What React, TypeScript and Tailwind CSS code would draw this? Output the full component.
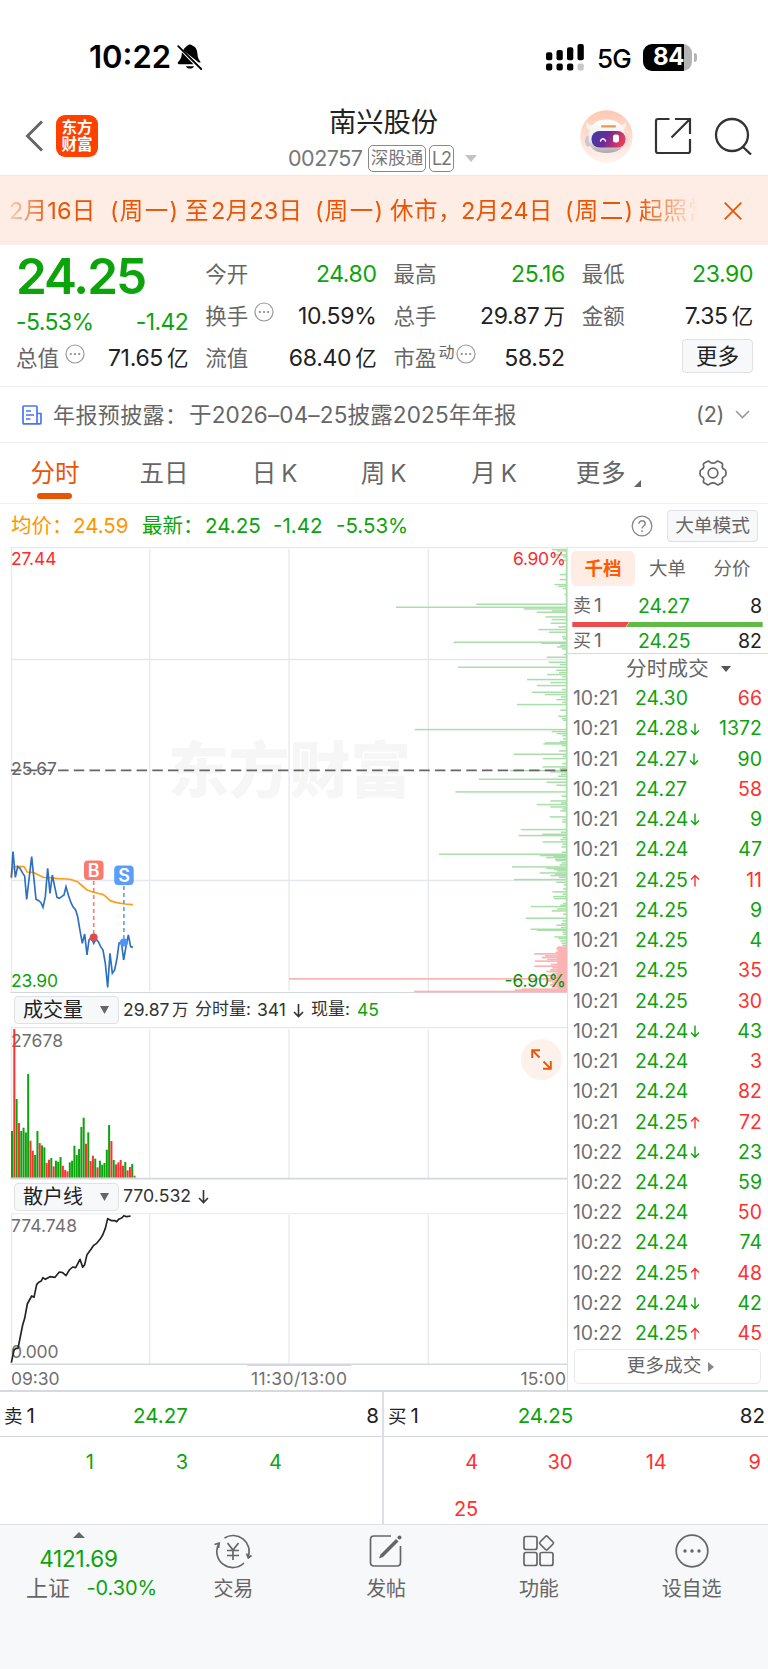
import React from "react";

type Trade = [time: string, price: string, dir: "" | "up" | "down", vol: string, side: "b" | "s"];

const TRADES: Trade[] = [
  ["10:21", "24.30", "", "66", "b"],
  ["10:21", "24.28", "down", "1372", "s"],
  ["10:21", "24.27", "down", "90", "s"],
  ["10:21", "24.27", "", "58", "b"],
  ["10:21", "24.24", "down", "9", "s"],
  ["10:21", "24.24", "", "47", "s"],
  ["10:21", "24.25", "up", "11", "b"],
  ["10:21", "24.25", "", "9", "s"],
  ["10:21", "24.25", "", "4", "s"],
  ["10:21", "24.25", "", "35", "b"],
  ["10:21", "24.25", "", "30", "b"],
  ["10:21", "24.24", "down", "43", "s"],
  ["10:21", "24.24", "", "3", "b"],
  ["10:21", "24.24", "", "82", "b"],
  ["10:21", "24.25", "up", "72", "b"],
  ["10:22", "24.24", "down", "23", "s"],
  ["10:22", "24.24", "", "59", "s"],
  ["10:22", "24.24", "", "50", "b"],
  ["10:22", "24.24", "", "74", "s"],
  ["10:22", "24.25", "up", "48", "b"],
  ["10:22", "24.24", "down", "42", "s"],
  ["10:22", "24.25", "up", "45", "b"],
];

/* Depth bars: [vertical position, length], in thirds of a pixel. */
const ASKS: number[][] = [
  [28, 46], [32, 30], [44, 40], [50, 12], [60, 10], [103, 22], [118, 22], [133, 38], [138, 26], [145, 12], [163, 8],
  [192, 272], [201, 513], [206, 130], [212, 46], [216, 91], [230, 64], [238, 46], [249, 49], [260, 26],
  [268, 86], [276, 54], [290, 15], [296, 12], [306, 340], [309, 78], [315, 20], [320, 30], [326, 15], [343, 10], [351, 61],
  [366, 55], [373, 22], [381, 327], [390, 32], [397, 24], [403, 60], [410, 14], [418, 120], [427, 50], [436, 90],
  [448, 16], [456, 105], [463, 66], [470, 18], [478, 32], [486, 14], [493, 150], [510, 20], [528, 26], [535, 16], [540, 12],
  [568, 457], [574, 46], [580, 31], [586, 14], [596, 12], [604, 22], [608, 66], [611, 71], [616, 16], [632, 24], [642, 160],
  [648, 12], [655, 73], [670, 14], [680, 73], [685, 22], [691, 171], [695, 50], [702, 18], [708, 27], [717, 265], [726, 62],
  [735, 32], [755, 335], [768, 17], [782, 50], [788, 18], [793, 91], [800, 50], [806, 14], [812, 20], [830, 52], [838, 14], [845, 15],
  [868, 138], [876, 18], [882, 74], [886, 145], [892, 14], [898, 20], [905, 73], [912, 14], [920, 17], [936, 16],
  [942, 384], [946, 82], [949, 40], [952, 62], [957, 36], [961, 34], [968, 16], [974, 22], [980, 165], [984, 62], [988, 40],
  [992, 30], [998, 82], [1002, 36], [1006, 50], [1011, 24], [1018, 159], [1026, 32], [1034, 10], [1046, 12], [1055, 44], [1062, 14],
  [1069, 42], [1075, 40], [1090, 12], [1095, 20], [1099, 109], [1106, 30], [1112, 46], [1122, 12], [1134, 124], [1142, 14],
  [1150, 18], [1155, 32], [1162, 18], [1167, 109], [1170, 91], [1176, 14], [1182, 12], [1190, 38], [1195, 26], [1202, 20], [1209, 16], [1215, 14],
];
const BIDS: number[][] = [
  [1222, 28], [1226, 32], [1232, 26], [1238, 34], [1242, 98], [1248, 66], [1253, 76], [1259, 60], [1264, 96], [1270, 30], [1274, 48],
  [1279, 98], [1284, 44], [1290, 50], [1295, 62], [1301, 44], [1307, 80], [1312, 50], [1317, 834], [1323, 60], [1329, 44],
  [1335, 52], [1341, 46], [1348, 136], [1351, 156], [1355, 459],
];

/* Volume bars: [height in thirds of a pixel, is rising]. */
const VOLUME: [number, boolean][] = [
  [140, false], [446, true], [236, false], [164, true], [140, false], [150, false], [136, false], [311, false], [111, true],
  [81, true], [68, false], [140, false], [104, true], [97, false], [91, false], [44, true], [54, true], [59, false], [34, true],
  [51, false], [48, false], [62, false], [36, true], [23, true], [19, true], [46, false], [51, false], [96, false], [68, false],
  [86, false], [152, false], [180, false], [102, true], [136, false], [50, true], [66, true], [57, false], [31, true], [51, false],
  [39, false], [44, false], [84, false], [158, false], [110, true], [53, false], [40, true], [46, true], [53, true], [36, true],
  [47, false], [22, true], [32, true], [41, false], [6, true],
];

const PRICE =
  "34,232 39,155 46,232 53,200 60,205 67,218 74,228 80,298 95,170 108,298 116,302 123,308 129,322 136,290 143,205 150,280 157,225 164,260 171,292 178,295 185,290 192,285 198,260 206,288 213,308 220,322 227,330 233,350 240,392 247,430 254,402 261,465 267,420 274,412 281,430 288,418 295,425 302,440 309,450 316,490 323,562 330,460 337,520 344,510 351,475 357,430 364,425 371,480 378,440 385,405 392,440 399,442";
const AVERAGE =
  "34,235 37,210 40,202 50,199 72,200 77,207 81,216 100,217 115,225 130,232 150,233 175,236 200,237 215,239 232,245 247,258 260,269 275,275 290,279 310,284 318,290 330,302 350,308 375,312 399,314";
const RETAIL =
  "34,1118 42,1080 48,1075 54,1075 62,1035 68,1005 74,985 82,942 95,918 102,922 110,884 116,877 124,873 129,863 136,868 150,860 165,862 178,846 188,848 198,857 208,840 218,831 227,833 240,808 248,832 254,824 261,794 273,778 281,766 290,760 300,748 308,735 316,715 323,686 335,692 345,692 350,695 356,688 365,684 372,677 380,680 392,678";

function StatusBar() {
  return (
    <div className="flex h-[100px] items-start justify-between pt-[41px] pr-[71px] pl-[89px] text-black">
      <div className="flex h-8 items-center">
        <span className="w-[88px] text-[31px] font-semibold">10:22</span>
        <svg className="mt-px h-[27px] w-[26px]" viewBox="0 0 26 27">
          <path d="M6.2 6.2C7.8 3 10 2 10.6 1.4C11.6.2 14.2.2 15.2 1.4C19.5 2.8 20.3 7 20.5 10.5C20.7 14 22 16 23.8 18.2L21.7 18.4ZM4.8 8.3L16.5 20.3H2C.8 20.3.4 19 1.2 18C3.6 15.3 4.9 13.4 4.8 8.3ZM9 22.2H17C16.3 25.3 9.7 25.3 9 22.2Z" fill="#000" />
          <path d="M1.2 2.2L24.2 25" stroke="#000" strokeWidth="1.8" strokeLinecap="round" />
        </svg>
      </div>
      <div className="flex h-8 items-center">
        <svg className="h-[27px] w-[38px]" viewBox="0 0 38 27">
          <g fill="#000">
            <rect x="0" y="8.3" width="6.3" height="8" rx="2" />
            <rect x="10.5" y="6" width="6.3" height="10.3" rx="2" />
            <rect x="21" y="3.2" width="6.3" height="13.1" rx="2" />
            <rect x="31.5" y="0" width="6.3" height="16.3" rx="2" />
            <rect x="0" y="19.5" width="6.3" height="7" rx="2" />
            <rect x="10.5" y="19.5" width="6.3" height="7" rx="2" />
            <rect x="21" y="19.5" width="6.3" height="7" rx="2" />
          </g>
          <rect x="31.5" y="19.5" width="6.3" height="7" rx="2" fill="#c8c8c8" />
        </svg>
        <span className="mt-[3px] ml-[13px] w-[46px] text-[26px] leading-none font-medium tracking-[-0.8px]">5G</span>
        <div className="flex h-[27px] w-[49px] items-center justify-center overflow-hidden rounded-[9px] bg-[linear-gradient(90deg,#000_84%,#b4b4b4_84%)] pl-0.5 text-[24px] leading-none font-bold tracking-[-0.5px] text-white">
          84
        </div>
        <div className="ml-[2px] h-[9px] w-[3px] rounded-r-full bg-[#b4b4b4]" />
      </div>
    </div>
  );
}

function Robot() {
  return (
    <svg className="size-[53px]" viewBox="0 0 53 53">
      <defs>
        <linearGradient id="halo" x1="0" y1="0" x2="0" y2="1">
          <stop offset="0" stopColor="#fdc9b2" />
          <stop offset="1" stopColor="#fff3ee" />
        </linearGradient>
        <linearGradient id="visor" x1="0" y1="0" x2="1" y2="0.25">
          <stop offset="0" stopColor="#3d3ba6" />
          <stop offset="0.5" stopColor="#6b2a98" />
          <stop offset="1" stopColor="#e8395c" />
        </linearGradient>
        <linearGradient id="shell" x1="0" y1="0" x2="0" y2="1">
          <stop offset="0" stopColor="#ffffff" />
          <stop offset="0.6" stopColor="#eeeaec" />
          <stop offset="1" stopColor="#a9a6ae" />
        </linearGradient>
      </defs>
      <circle cx="26.5" cy="26.5" r="26.2" fill="url(#halo)" />
      <path d="M6.500 11.500C5.500 16 7 19.500 10.500 20L14 14.500C10.500 15.500 8 14.500 6.500 11.500ZM46 11.500C47 16 45.500 19.500 42 20L39 14.500C42 15.500 44.500 14.500 46 11.500Z" fill="#f4f1f1" />
      <ellipse cx="8.500" cy="31" rx="3.500" ry="5.500" fill="#c9c6cc" />
      <ellipse cx="45" cy="31" rx="3.500" ry="5.500" fill="#e6dfe2" />
      <path d="M8.500 28C8.500 15 16 9.500 26.500 9.500S45 15 45 28C45 38 38 43 26.500 43S8.500 38 8.500 28Z" fill="url(#shell)" />
      <rect x="21" y="15.200" width="15" height="2.300" rx="1.100" fill="#e59a55" />
      <rect x="11.500" y="21" width="34" height="16.500" rx="8" fill="url(#visor)" />
      <path d="M20.500 31C21.500 28 24.500 28 25.500 31" fill="none" stroke="#fff" strokeWidth="1.500" strokeLinecap="round" />
      <rect x="33" y="24.500" width="6" height="8" rx="2.300" fill="#fff" />
    </svg>
  );
}

function Header() {
  return (
    <header className="flex h-[76px] items-center border-b border-[#e9e9ec] pr-[17px] pl-[25px]">
      <svg className="mt-[-3px] h-[32px] w-[18px]" viewBox="0 0 18 32" fill="none" stroke="#666" strokeWidth="3">
        <path d="M17 1.500L2.500 16L17 30.500" />
      </svg>
      <div className="mt-[-3px] ml-[13px] grid size-[42px] grid-cols-1 place-content-center rounded-[9px] bg-[#ff4100] text-center text-[15.500px] leading-[17.500px] font-bold text-white">
        <span>东方</span>
        <span>财富</span>
      </div>
      <div className="mt-[3px] ml-[190px] flex w-[190px] flex-col items-center">
        <h1 className="h-[38px] pl-px text-[27.300px] leading-[38px] text-[#222]">南兴股份</h1>
        <div className="flex h-[33px] w-full items-center text-[#777]">
          <span className="w-[80px] text-[21.500px] tracking-[-0.500px] text-[#777]">002757</span>
          <span className="flex h-[27px] w-[58px] items-center justify-center rounded-[5px] border border-[#888] text-[17.500px]">深股通</span>
          <span className="ml-[3px] flex h-[27px] w-[25px] items-center justify-center rounded-[5px] border border-[#888] text-[18px] tracking-[-1px]">L2</span>
          <svg className="ml-[11px] h-[7px] w-[12px]" viewBox="0 0 12 7">
            <path d="M0 0H12L6 7Z" fill="#c3c3c3" />
          </svg>
        </div>
      </div>
      <div className="mt-[-3px] -mr-px ml-auto flex items-center">
        <Robot />
        <svg className="ml-[21px] size-[38px]" viewBox="0 0 38 38" fill="none" stroke="#333" strokeWidth="2.200">
          <path d="M15.500 2H4Q2 2 2 4V34Q2 36 4 36H34Q36 36 36 34V22" />
          <path d="M21 2H36V17M36 2L17.500 20.500" />
        </svg>
        <svg className="ml-[22px] size-[38px]" viewBox="0 0 38 38" fill="none" stroke="#333" strokeWidth="2.300">
          <circle cx="18" cy="18" r="16" />
          <path d="M28.500 29.500L37 37.500" />
        </svg>
      </div>
    </header>
  );
}

function Notice() {
  return (
    <div className="flex h-[69px] items-center bg-[#feede5] text-[23.500px] text-[#ea5504]">
      <div className="flex w-[698px] overflow-hidden pl-[9px] whitespace-nowrap [mask-image:linear-gradient(90deg,transparent_0,#000_50px,#000_640px,transparent_100%)]">
        <span className="w-[101px] shrink-0 tracking-[0.200px]">2月16日</span>
        <span className="w-[75px] shrink-0 tracking-[1.300px]">(周一)</span>
        <span className="w-[26px] shrink-0">至</span>
        <span className="w-[104px] shrink-0 tracking-[0.200px]">2月23日</span>
        <span className="w-[75px] shrink-0 tracking-[1.300px]">(周一)</span>
        <span className="w-[71px] shrink-0 tracking-[0.500px]">休市，</span>
        <span className="w-[104px] shrink-0 tracking-[0.200px]">2月24日</span>
        <span className="w-[74px] shrink-0 tracking-[1.300px]">(周二)</span>
        <span className="shrink-0 tracking-[1px]">起照常</span>
      </div>
      <svg className="ml-[26px] size-[18px]" viewBox="0 0 18 18" stroke="#ea5504" strokeWidth="1.800">
        <path d="M.7.7L17.300 17.300M17.300.7L.7 17.300" />
      </svg>
    </div>
  );
}

function Info() {
  return (
    <svg className="mb-2 ml-[6px] size-[20px]" viewBox="0 0 20 20">
      <circle cx="10" cy="10" r="9" fill="none" stroke="#999" strokeWidth="1.200" />
      <g fill="#888">
        <circle cx="5.800" cy="10" r="1.100" />
        <circle cx="10" cy="10" r="1.100" />
        <circle cx="14.200" cy="10" r="1.100" />
      </g>
    </svg>
  );
}

function Stat({ label, value, green, info, sup }: { label: string; value: string; green?: boolean; info?: boolean; sup?: string }) {
  return (
    <div className="flex h-[42px] items-center">
      <span className="text-[21.500px] text-[#666]">{label}</span>
      {sup && <span className="-mr-[5px] mb-3 ml-[2px] text-[16px] text-[#666]">{sup}</span>}
      {info && <Info />}
      <span className={green ? "ml-auto text-[23px] tracking-[-0.400px] text-[#0da30d]" : "ml-auto text-[23px] tracking-[-0.300px] text-[#222]"}>
        {value.replace(/[亿万]/, "")}
        {/[亿万]/.test(value) && <span className="ml-[4px] text-[21.500px]">{value.slice(-1)}</span>}
      </span>
    </div>
  );
}

function Quotes() {
  return (
    <section className="grid h-[142px] grid-cols-4 gap-[17px] border-b border-[#f1f1f3] pt-[8px] pr-[15px] pl-[17px]">
      <div className="-ml-px">
        <div className="h-[48px] text-[49.500px] leading-[46px] font-semibold tracking-[-2px] text-[#0da30d]">24.25</div>
        <div className="flex h-[36px] items-center justify-between pt-[7px] text-[23px] tracking-[-0.600px] text-[#0da30d]">
          <span>-5.53%</span>
          <span>-1.42</span>
        </div>
        <Stat label="总值" value="71.65亿" info />
      </div>
      <div>
        <Stat label="今开" value="24.80" green />
        <Stat label="换手" value="10.59%" info />
        <Stat label="流值" value="68.40亿" />
      </div>
      <div>
        <Stat label="最高" value="25.16" green />
        <Stat label="总手" value="29.87万" />
        <Stat label="市盈" value="58.52" sup="动" info />
      </div>
      <div>
        <Stat label="最低" value="23.90" green />
        <Stat label="金额" value="7.35亿" />
        <button className="mt-[2px] ml-auto flex h-[34px] w-[71px] items-center justify-center rounded-[4px] border border-[#dfe1e6] bg-[#f7f8fa] text-[21.500px] text-[#222]">
          更多
        </button>
      </div>
    </section>
  );
}

function Report() {
  return (
    <section className="flex h-[56px] items-center border-b border-[#f1f1f3] pr-[18px] pl-[22px] text-[22px] text-[#666]">
      <svg className="size-[20px]" viewBox="0 0 20 20" fill="none" stroke="#4a74f0" strokeWidth="1.700">
        <path d="M15 18.800H2Q1 18.800 1 17.800V2Q1 1 2 1H14Q15 1 15 2V18.800H18Q19 18.800 19 17.800V8.500H15M4 6H9M4 10H12M4 14H8.500" />
      </svg>
      <span className="mt-px ml-[11px] w-[136px] whitespace-nowrap tracking-[0.400px]">年报预披露：</span>
      <span className="mt-px text-[22.500px] tracking-[0.160px]">于2026–04–25披露2025年年报</span>
      <span className="ml-auto text-[21.500px] tracking-[-0.300px]">(2)</span>
      <svg className="ml-[11px] h-[9px] w-[15px]" viewBox="0 0 15 9" fill="none" stroke="#999" strokeWidth="1.600">
        <path d="M1 1L7.500 7.500L14 1" />
      </svg>
    </section>
  );
}

function KTab({ period, className }: { period: string; className: string }) {
  return (
    <span className={className}>
      {period}
      <span className="ml-[5px] text-[24px]">K</span>
    </span>
  );
}

function Tabs() {
  return (
    <nav className="flex h-[61px] border-b border-[#f1f1f3] text-[24.500px] text-[#666]">
      <div className="flex w-[109px] flex-col items-center text-[#ea5504]">
        <span className="h-[50px] pl-px leading-[60px]">分时</span>
        <span className="h-[6px] w-[35px] rounded-full bg-[#ea5504]" />
      </div>
      <span className="w-[110px] text-center leading-[60px]">五日</span>
      <KTab period="日" className="w-[111px] text-center leading-[60px]" />
      <KTab period="周" className="w-[107px] text-center leading-[60px]" />
      <KTab period="月" className="w-[114px] text-center leading-[60px]" />
      <span className="flex w-[115px] justify-center leading-[60px] tracking-[0.800px]">
        更多
        <svg className="mt-[37px] ml-[8px] size-[7px]" viewBox="0 0 7 7">
          <path d="M7 0V7H0Z" fill="#666" />
        </svg>
      </span>
      <span className="flex flex-1 items-center pl-[33px]">
        <svg className="size-[28px]" viewBox="0 0 28 28" fill="none" stroke="#666" strokeWidth="1.700" strokeLinejoin="round">
          <path d="M8.200 2.500Q9.500 1.500 11 3.200Q14 5.200 17 3.200Q18.500 1.500 19.800 2.500L23 4.200Q24 5 23.300 7.200Q22.800 9.500 25.500 10.500Q27.200 11.200 27 14Q27.200 16.800 25.500 17.500Q22.800 18.500 23.300 20.800Q24 23 23 23.800L19.800 25.500Q18.500 26.500 17 24.800Q14 22.800 11 24.800Q9.500 26.500 8.200 25.500L5 23.800Q4 23 4.700 20.800Q5.200 18.500 2.500 17.500Q.8 16.800 1 14Q.8 11.200 2.500 10.500Q5.200 9.500 4.700 7.200Q4 5 5 4.200Z" />
          <circle cx="14" cy="14" r="4.800" />
        </svg>
      </span>
    </nav>
  );
}

function AverageLine() {
  return (
    <div className="flex h-[43px] items-center pt-px pr-[10px] pl-[11px] text-[20.500px] text-[#0da30d]">
      <span className="w-[62px] text-[#ff9500]">均价：</span>
      <span className="w-[69px] text-[#ff9500]">24.59</span>
      <span className="w-[63px]">最新：</span>
      <span className="w-[68px]">24.25</span>
      <span className="w-[63px]">-1.42</span>
      <span>-5.53%</span>
      <svg className="ml-auto size-[22px]" viewBox="0 0 22 22" fill="none" stroke="#888" strokeWidth="1.300">
        <circle cx="11" cy="11" r="9.800" />
        <path d="M8 8.800C8 4.800 14.200 5 14.200 8.700C14.200 11 11.100 11 11.100 13.500M11.100 15.200V17" strokeWidth="1.500" />
      </svg>
      <button className="ml-[14px] flex h-[32px] w-[91px] items-center justify-center rounded-[4px] border border-[#dfe1e6] bg-[#f7f8fa] text-[18.700px] text-[#666]">
        大单模式
      </button>
    </div>
  );
}

function PriceChart() {
  return (
    <svg className="block h-[446px] w-[568px]" viewBox="0 547 568 446" fontSize="17.500" fontFamily="Inter, sans-serif">
      <text x="168" y="793" fontSize="61" fontWeight="900" fontFamily="Noto Sans CJK SC, sans-serif" textLength="243" fill="#f6f6f6">东方财富</text>
      <g stroke="#e5e8ef" strokeWidth="1.300">
        <path d="M11 547.500H568M11 659.500H567M11 880.500H567" />
        <path d="M11.500 548V992M149.700 549V991M289 549V991M428.300 549V991" />
      </g>
      <path d="M10.500 992.700H567" stroke="#d3d7df" strokeWidth="1.400" />
      <g fill="#a8dfa8">
        <rect x="565.800" y="549" width="1.200" height="398" />
        {ASKS.map(([y, w]) => (
          <rect key={y} x={567 - w / 3} y={539.5 + y / 3} width={w / 3} height="1.500" />
        ))}
      </g>
      <path d="M11 770.300H567" stroke="#666" strokeWidth="1.800" strokeDasharray="10.500 5.200" />
      <g fill="#fbb4b4">
        <rect x="557.500" y="947" width="9.500" height="45" />
        {BIDS.map(([y, w]) => (
          <rect key={y} x={567 - w / 3} y={539 + y / 3} width={w / 3} height="1.700" />
        ))}
      </g>
      <text x="11" y="564.500" fill="#ff2a2a" textLength="45.500">27.44</text>
      <text x="11" y="775" fill="#666" textLength="46">25.67</text>
      <text x="11" y="986.500" fill="#0da30d" textLength="47">23.90</text>
      <text x="513" y="564.500" fill="#ff2a2a" textLength="53">6.90%</text>
      <text x="504.500" y="986.500" fill="#0b8f0b" textLength="61.500">-6.90%</text>
      <g transform="translate(0 800) scale(.33333)" fill="none" strokeLinejoin="round">
        <polyline points={AVERAGE} stroke="#ff9d14" strokeWidth="5" />
        <polyline points={PRICE} stroke="#2c70c2" strokeWidth="5" strokeLinejoin="miter" />
      </g>
      <path d="M93.700 881V936" stroke="#fa7a6c" strokeWidth="1.600" strokeDasharray="4 3" />
      <path d="M123.900 886V941" stroke="#5a9dfa" strokeWidth="1.600" strokeDasharray="4 3" />
      <circle cx="93.700" cy="937.500" r="4" fill="#d84c50" />
      <circle cx="123.900" cy="942.500" r="4" fill="#4c94f5" />
      <rect x="84" y="860.500" width="19.500" height="19.500" rx="4" fill="#fa7a6c" />
      <rect x="114.200" y="865.500" width="19.500" height="19.500" rx="4" fill="#5a9dfa" />
      <text x="93.800" y="877" fontSize="18" fontWeight="600" textAnchor="middle" fill="#fff">B</text>
      <text x="124" y="882" fontSize="18" fontWeight="600" textAnchor="middle" fill="#fff">S</text>
    </svg>
  );
}

function Picker({ children }: { children: string }) {
  return (
    <button className="flex h-[28px] w-[105px] shrink-0 items-center justify-between rounded-[4px] border border-[#dfe1e6] bg-[#f7f8fa] pr-[9px] pl-[8px] text-[20px] text-[#222]">
      {children}
      <svg className="h-[8px] w-[9px]" viewBox="0 0 9 8">
        <path d="M0 0H9L4.500 8Z" fill="#666" />
      </svg>
    </button>
  );
}

function Down() {
  return (
    <svg className="h-[15px] w-[11px]" viewBox="0 0 11 15" fill="none" stroke="#333" strokeWidth="1.600">
      <path d="M5.500 1V13.500M1 9L5.500 13.500L10 9" />
    </svg>
  );
}

function VolumePanel() {
  return (
    <>
      <div className="flex h-[34px] items-center pl-[14px] text-[17.500px] text-[#333]">
        <Picker>成交量</Picker>
        <span className="ml-[4px] w-[49px]">29.87</span>
        <span className="w-[23px] text-[16.500px]">万</span>
        <span className="w-[62px] text-[17px]">分时量:</span>
        <span className="w-[36px]">341</span>
        <Down />
        <span className="ml-[7px] w-[46px] text-[17px]">现量:</span>
        <span className="text-[#0da30d]">45</span>
      </div>
      <div className="relative">
        <svg className="block h-[153px] w-[568px]" viewBox="0 1027 568 153" fontSize="17.500" fontFamily="Inter, sans-serif">
          <g stroke="#e5e8ef" strokeWidth="1.300">
            <path d="M11 1027.600H567M11.500 1028V1178M149.700 1029.500V1178M289 1029.500V1178M428.300 1029.500V1178" />
          </g>
          <text x="11" y="1046.500" fill="#707070" textLength="52">27678</text>
          {VOLUME.map(([h, up], i) => (
            <rect key={i} x={11 + i * 2.312} y={1177.7 - h / 3} width="2" height={h / 3} fill={up ? "#ff3030" : "#0da30d"} />
          ))}
          <path d="M10.500 1178.600H567" stroke="#d3d7df" strokeWidth="1.600" />
        </svg>
        <div className="absolute top-[12px] left-[521px] flex size-[41px] items-center justify-center rounded-full bg-[#fdf1eb]">
          <svg className="size-[21px]" viewBox="0 0 21 21" fill="none" stroke="#ea5504" strokeWidth="1.900">
            <path d="M1.200 9V1.200H9M1.200 1.200L8.500 8.500M19.800 12V19.800H12M19.800 19.800L12.500 12.500" />
          </svg>
        </div>
      </div>
    </>
  );
}

function RetailPanel() {
  return (
    <>
      <div className="flex h-[33px] items-center pl-[14px] text-[17.700px] text-[#333]">
        <Picker>散户线</Picker>
        <span className="ml-[4px] w-[75px]">770.532</span>
        <Down />
      </div>
      <svg className="block h-[177px] w-[568px]" viewBox="0 1213 568 177" fontSize="17.500" fontFamily="Inter, sans-serif">
        <path d="M11 1213.400H567" stroke="#ededf0" strokeWidth="1.500" />
        <g stroke="#e5e8ef" strokeWidth="1.300">
          <path d="M11.500 1214V1364M149.700 1215V1364M289 1215V1364M428.300 1215V1364" />
          <path d="M10.500 1364.300H567" stroke="#d3d7df" strokeWidth="1.500" />
          <path d="M247 1365.300H351" stroke="#d3d7df" />
        </g>
        <g fill="#707070">
          <text x="11" y="1232" textLength="66">774.748</text>
          <text x="11" y="1357.700" textLength="47.500">0.000</text>
          <text x="11" y="1384.700" textLength="48.500">09:30</text>
          <text x="251" y="1384.700" textLength="96">11:30/13:00</text>
          <text x="520.500" y="1384.700" textLength="45.500">15:00</text>
        </g>
        <polyline transform="translate(0 990) scale(.33333)" points={RETAIL} fill="none" stroke="#222" strokeWidth="5" strokeLinejoin="round" />
      </svg>
    </>
  );
}

function Tick({ dir }: { dir: "up" | "down" }) {
  return (
    <svg className="ml-[2px] h-[13px] w-[10px]" viewBox="0 0 10 13" fill="none" stroke={dir === "up" ? "#ff3030" : "#0da30d"} strokeWidth="1.400">
      <path d={dir === "up" ? "M5 12.500V1.500M1 5.500L5 1.500L9 5.500" : "M5 .5V11.500M1 7.500L5 11.500L9 7.500"} />
    </svg>
  );
}

function Level({ label, price, vol }: { label: string; price: string; vol: string }) {
  return (
    <div className="flex h-[28px] items-center pr-[6px] pl-[5px]">
      <span className="w-[65px] text-[18px] text-[#666]">
        {label}
        <span className="ml-[3px] text-[19px]">1</span>
      </span>
      <span className="text-[19.500px] tracking-[-0.100px] text-[#0da30d]">{price}</span>
      <span className="ml-auto text-[19.500px] text-[#222]">{vol}</span>
    </div>
  );
}

function SidePanel() {
  return (
    <aside className="flex h-[843px] flex-1 flex-col border-l border-[#dcdfe6]">
      <div className="flex h-[44px] items-start border-t border-[#e5e8ef] pt-[3px] pl-[3px] text-[18.500px] text-[#666]">
        <span className="flex h-[35px] w-[64px] items-center justify-center rounded-[5px] bg-[#feede5] font-bold text-[#ff5a00]">千档</span>
        <span className="flex h-[35px] w-[65px] items-center justify-center">大单</span>
        <span className="flex h-[35px] w-[64px] items-center justify-center">分价</span>
      </div>
      <div className="h-[31px] pt-[1.500px]">
        <Level label="卖" price="24.27" vol="8" />
      </div>
      <svg className="ml-[4px] h-[5px] w-[192px]" viewBox="0 0 192 5">
        <path d="M0 0H57L53.500 5H0Z" fill="#ee4b4b" />
        <path d="M57.500 0H191V5H54Z" fill="#60bb46" />
      </svg>
      <div className="h-[28px] pt-px">
        <Level label="买" price="24.25" vol="82" />
      </div>
      <div className="mt-[-2px] flex h-[31px] items-center justify-center border-t-[1.500px] border-[#d5d9e0] pt-px pl-[21px] text-[20.500px] tracking-[0.300px] text-[#666]">
        分时成交
        <svg className="ml-[12px] h-[6px] w-[10px]" viewBox="0 0 10 6">
          <path d="M0 0H10L5 6Z" fill="#555" />
        </svg>
      </div>
      {TRADES.map(([time, price, dir, vol, side], i) => (
        <div key={i} className="flex h-[30.350px] items-center pr-[6px] pl-[5px] text-[19.500px]">
          <span className="w-[62px] tracking-[-0.100px] text-[#707070]">{time}</span>
          <span className="text-[#0da30d]">{price}</span>
          {dir && <Tick dir={dir} />}
          <span className={side === "b" ? "ml-auto text-[#ff3030]" : "ml-auto text-[#0da30d]"}>{vol}</span>
        </div>
      ))}
      <button className="mt-auto mb-[6px] ml-[6px] flex h-[35px] w-[187px] shrink-0 items-center justify-center rounded-[5px] border border-[#e9e9ec] pl-[6px] text-[18.700px] text-[#666]">
        更多成交
        <svg className="ml-[7px] h-[10px] w-[6px]" viewBox="0 0 6 10">
          <path d="M0 0L6 5L0 10Z" fill="#888" />
        </svg>
      </button>
    </aside>
  );
}

function QueueHead({ label, price, vol }: { label: string; price: string; vol: string }) {
  return (
    <div className="grid h-[45px] grid-cols-3 items-center border-b-[1.500px] border-[#d3d7df] pt-[4px] pr-[3px] pl-[4px] text-[20.500px] text-[#222]">
      <span className="text-[18.500px]">
        {label}
        <span className="ml-[4px] text-[20.500px]">1</span>
      </span>
      <span className="ml-[4px] text-[#0da30d]">{price}</span>
      <span className="text-right">{vol}</span>
    </div>
  );
}

function Queues() {
  return (
    <section className="grid h-[134px] grid-cols-2 grid-rows-[132px] overflow-hidden border-t-2 border-[#d5dae0] text-[20px]">
      <div className="border-r-2 border-[#dcdfe6]">
        <QueueHead label="卖" price="24.27" vol="8" />
        <div className="grid grid-cols-4 pt-[2px] pr-[6px] text-right leading-[46.500px] text-[#0da30d]">
          <span>1</span>
          <span>3</span>
          <span>4</span>
        </div>
      </div>
      <div>
        <QueueHead label="买" price="24.25" vol="82" />
        <div className="grid grid-cols-4 pt-[2px] pr-[7px] text-right leading-[46.500px] text-[#ff3030]">
          <span>4</span>
          <span>30</span>
          <span>14</span>
          <span>9</span>
          <span>25</span>
        </div>
      </div>
    </section>
  );
}

function NavItem({ label, children }: { label: string; children: React.ReactNode }) {
  return (
    <div className="flex w-[153px] flex-col items-center pt-[7px]">
      <svg className="h-[38px] w-[38px]" viewBox="0 0 38 38" fill="none" stroke="#666" strokeWidth="1.700">
        {children}
      </svg>
      <span className="mt-[5px] h-[28px] text-[20px] leading-[28px]">{label}</span>
    </div>
  );
}

function BottomNav() {
  return (
    <nav className="flex h-[146px] border-t border-[#dfe1e6] bg-[#f7f8fa] text-[#666]">
      <div className="flex w-[157px] flex-col items-center pt-[7px]">
        <svg className="h-[6px] w-[12px]" viewBox="0 0 12 6">
          <path d="M0 6H12L6 0Z" fill="#666" />
        </svg>
        <span className="mt-[6px] h-[29px] text-[22.500px] leading-[29px] tracking-[-0.200px] text-[#0da30d]">4121.69</span>
        <span className="flex w-full items-center pl-[26px] leading-[31px]">
          <span className="w-[62px] text-[22px]">上证</span>
          <span className="text-[20px] tracking-[-0.100px] text-[#0da30d]">-0.30%</span>
        </span>
      </div>
      <NavItem label="交易">
        <path d="M10.500 6A16 16 0 0 1 34.300 24.500M30 31A16 16 0 0 1 5 11.500M.5 12.500L5.200 11.200L4.500 16M37.500 23.500L34.300 26L32.500 21.500" />
        <path d="M13.500 11L19 18L24.500 11M13 18.500H25M13 23.500H25M19 18V28" />
      </NavItem>
      <NavItem label="发帖">
        <path d="M24 4H7Q3.500 4 3.500 7.500V30.500Q3.500 34 7 34H30Q33.500 34 33.500 30.500V14" />
        <path d="M12 26.500L13.500 22.500L29 7L31.500 9.500L16 25Z" fill="#666" stroke="none" />
        <circle cx="32.500" cy="5.500" r="2" fill="#666" stroke="none" />
      </NavItem>
      <NavItem label="功能">
        <rect x="4" y="4.500" width="13" height="13" rx="2" />
        <rect x="4" y="20.500" width="13" height="13" rx="2" />
        <rect x="20" y="20.500" width="13" height="13" rx="2" />
        <path d="M25.500 4.500Q26.500 3.500 27.500 4.500L33 10Q34 11 33 12L27.500 17.500Q26.500 18.500 25.500 17.500L20 12Q19 11 20 10Z" />
      </NavItem>
      <NavItem label="设自选">
        <circle cx="19" cy="19" r="15.800" />
        <g fill="#666" stroke="none">
          <circle cx="12" cy="19" r="1.700" />
          <circle cx="19" cy="19" r="1.700" />
          <circle cx="26" cy="19" r="1.700" />
        </g>
      </NavItem>
    </nav>
  );
}

export default function App() {
  return (
    <div className="h-[1669px] w-[768px] overflow-hidden bg-white [font-family:Inter,'Noto_Sans_CJK_SC',sans-serif]">
      <StatusBar />
      <Header />
      <Notice />
      <Quotes />
      <Report />
      <Tabs />
      <AverageLine />
      <div className="flex">
        <div className="w-[567px] overflow-hidden">
          <PriceChart />
          <VolumePanel />
          <RetailPanel />
        </div>
        <SidePanel />
      </div>
      <Queues />
      <BottomNav />
    </div>
  );
}
